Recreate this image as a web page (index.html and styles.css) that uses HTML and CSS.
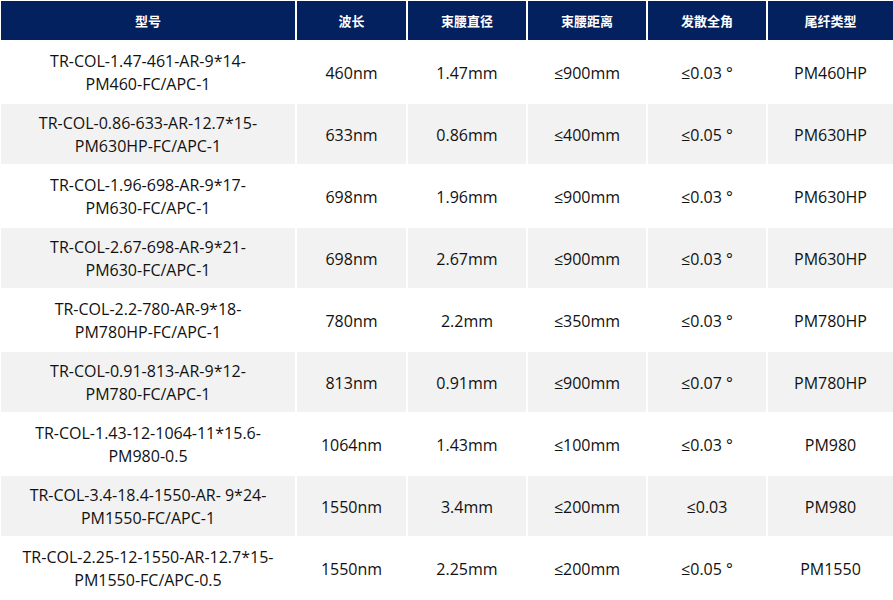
FILE: index.html
```html
<!DOCTYPE html>
<html lang="zh-CN"><head><meta charset="utf-8"><title>准直器参数</title><link rel="stylesheet" href="styles.css"></head>
<body>
<table class="spec">
  <colgroup>
    <col class="c-model"><col class="c-wl"><col class="c-mid"><col class="c-mid"><col class="c-mid"><col class="c-fiber">
  </colgroup>
  <thead>
    <tr><th>型号</th><th>波长</th><th>束腰直径</th><th>束腰距离</th><th>发散全角</th><th>尾纤类型</th></tr>
  </thead>
  <tbody>
    <tr><td>TR-COL-1.47-461-AR-9*14-<br>PM460-FC/APC-1</td><td>460nm</td><td>1.47mm</td><td>≤900mm</td><td>≤0.03 °</td><td>PM460HP</td></tr>
    <tr><td>TR-COL-0.86-633-AR-12.7*15-<br>PM630HP-FC/APC-1</td><td>633nm</td><td>0.86mm</td><td>≤400mm</td><td>≤0.05 °</td><td>PM630HP</td></tr>
    <tr><td>TR-COL-1.96-698-AR-9*17-<br>PM630-FC/APC-1</td><td>698nm</td><td>1.96mm</td><td>≤900mm</td><td>≤0.03 °</td><td>PM630HP</td></tr>
    <tr><td>TR-COL-2.67-698-AR-9*21-<br>PM630-FC/APC-1</td><td>698nm</td><td>2.67mm</td><td>≤900mm</td><td>≤0.03 °</td><td>PM630HP</td></tr>
    <tr><td>TR-COL-2.2-780-AR-9*18-<br>PM780HP-FC/APC-1</td><td>780nm</td><td>2.2mm</td><td>≤350mm</td><td>≤0.03 °</td><td>PM780HP</td></tr>
    <tr><td>TR-COL-0.91-813-AR-9*12-<br>PM780-FC/APC-1</td><td>813nm</td><td>0.91mm</td><td>≤900mm</td><td>≤0.07 °</td><td>PM780HP</td></tr>
    <tr><td>TR-COL-1.43-12-1064-11*15.6-<br>PM980-0.5</td><td>1064nm</td><td>1.43mm</td><td>≤100mm</td><td>≤0.03 °</td><td>PM980</td></tr>
    <tr><td>TR-COL-3.4-18.4-1550-AR- 9*24-<br>PM1550-FC/APC-1</td><td>1550nm</td><td>3.4mm</td><td>≤200mm</td><td>≤0.03</td><td>PM980</td></tr>
    <tr><td>TR-COL-2.25-12-1550-AR-12.7*15-<br>PM1550-FC/APC-0.5</td><td>1550nm</td><td>2.25mm</td><td>≤200mm</td><td>≤0.05 °</td><td>PM1550</td></tr>
  </tbody>
</table>
</body></html>
```
FILE: styles.css
```css
html, body {
  margin: 0;
  padding: 0;
  overflow: hidden;
  background: #ffffff;
}
.spec {
  table-layout: fixed;
  width: 896px;
  margin: -1px 0 0 -1px;
  border-collapse: separate;
  border-spacing: 2px;
  font-family: "Open Sans", "Noto Sans CJK SC", sans-serif;
  font-size: 16px;
  line-height: 23px;
  color: #111111;
}
.c-model { width: 294px; }
.c-wl { width: 109px; }
.c-mid { width: 118px; }
.c-fiber { width: 125px; }
.spec th {
  height: 39px;
  padding: 0;
  background: #03205f;
  color: #ffffff;
  font-family: "Noto Sans CJK SC", sans-serif;
  font-size: 13px;
  font-weight: 700;
  text-align: center;
  vertical-align: middle;
}
.spec td {
  box-sizing: border-box;
  height: 60px;
  padding: 2px 0 0;
  text-align: center;
  vertical-align: middle;
  background: #ffffff;
}
.spec tbody tr:nth-child(even) td {
  background: #f2f2f2;
}
```
